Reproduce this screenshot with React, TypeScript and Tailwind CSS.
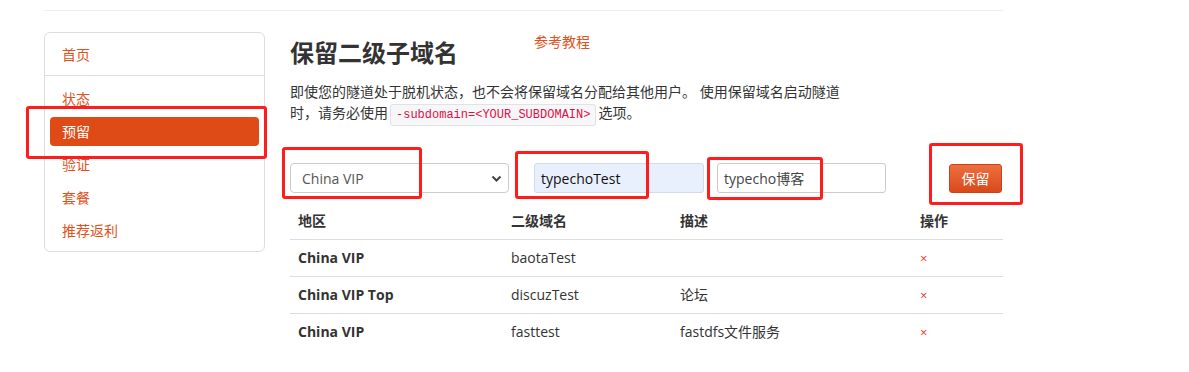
const FONT = { fontFamily: '"Open Sans", "Noto Sans CJK SC", sans-serif' };

const navItems = ['状态', '预留', '验证', '套餐', '推荐返利'];

const rows = [
  { region: 'China VIP', sub: 'baotaTest', desc: '' },
  { region: 'China VIP Top', sub: 'discuzTest', desc: '论坛' },
  { region: 'China VIP', sub: 'fasttest', desc: 'fastdfs文件服务' },
];

// red annotation frames drawn on top of the screenshot
const marks = [
  'left-[26px] top-[106px] w-[241px] h-[53px]',
  'left-[282px] top-[147px] w-[140px] h-[52px]',
  'left-[515px] top-[151px] w-[134px] h-[48px]',
  'left-[707px] top-[157px] w-[116px] h-[43px]',
  'left-[929px] top-[143px] w-[94px] h-[62px]',
];

const App = () => {
  return (
    <div className="relative w-[1189px] h-[372px] bg-white text-[#333] overflow-hidden" style={FONT}>
      <div className="ml-[44px] w-[959px] pt-[10px]">
        <div className="border-t border-[#eeeeee]"></div>

        <div className="flex mt-[21px]">
          {/* sidebar */}
          <div className="w-[221px] h-[220px] shrink-0 border border-[#dddddd] rounded-[6px] text-[14px] text-[#e0521c]">
            <div className="h-[43px] flex items-center pl-[17px] border-b border-[#dddddd]">首页</div>
            <div className="pt-[6px]">
              {navItems.map(item =>
                item === '预留' ? (
                  <div key={item} className="h-[33px] flex items-center px-[5px]">
                    <div className="w-full h-[29px] flex items-center pl-[12px] bg-[#df4b16] text-white rounded-[4px]">
                      {item}
                    </div>
                  </div>
                ) : (
                  <div key={item} className="h-[33px] flex items-center pl-[17px]">{item}</div>
                )
              )}
            </div>
          </div>

          {/* main */}
          <div className="ml-[25px] w-[713px]">
            <div className="flex">
              <h1 className="text-[24px] font-bold leading-[40px] pt-[1px] text-[#333]">保留二级子域名</h1>
              <a className="ml-[76px] text-[14px] leading-[20px] text-[#e0521c]">参考教程</a>
            </div>

            <p className="mt-[8px] text-[14px] leading-[21px] text-[#333]">
              即使您的隧道处于脱机状态，也不会将保留域名分配给其他用户。 使用保留域名启动隧道
              <br />
              时，请务必使用
              <code className="mx-[2px] px-[5px] py-[3px] text-[12px] text-[#dd1144] bg-[#f7f7f9] border border-[#e1e1e8] rounded-[3px] font-['Liberation_Mono',monospace]">
                -subdomain=&lt;YOUR_SUBDOMAIN&gt;
              </code>
              选项。
            </p>

            <div className="flex items-center mt-[37px] h-[30px] text-[14px]">
              <div className="relative w-[219px] h-[30px] border border-[#cccccc] rounded-[4px] flex items-center pl-[11px] text-[#555]">
                China VIP
                <svg className="absolute right-[6px] top-[11px]" width="11" height="8" viewBox="0 0 11 8">
                  <path d="M1.5 1.5 L5.5 5.5 L9.5 1.5" fill="none" stroke="#444" strokeWidth="2" />
                </svg>
              </div>
              <div className="ml-[25px] w-[170px] h-[30px] border border-[#d3dbe8] rounded-[3px] bg-[#e8f0fe] flex items-center pl-[6px] text-[#111]">
                typechoTest
              </div>
              <div className="ml-[13px] w-[169px] h-[30px] border border-[#cccccc] rounded-[3px] flex items-center pl-[6px] text-[#444]">
                typecho博客
              </div>
              <button className="ml-[63px] w-[53px] h-[29px] rounded-[3px] border border-[#c9431a] bg-gradient-to-b from-[#ee6e3e] to-[#d9491a] text-white text-[14px]">
                保留
              </button>
            </div>

            <table className="mt-[9px] w-full text-[14px] border-collapse">
              <thead>
                <tr className="h-[37px] border-b border-[#dddddd] text-left">
                  <th className="w-[213px] pl-[8px] font-bold">地区</th>
                  <th className="w-[169px] pl-[8px] font-bold">二级域名</th>
                  <th className="w-[240px] pl-[8px] font-bold">描述</th>
                  <th className="pl-[8px] font-bold">操作</th>
                </tr>
              </thead>
              <tbody>
                {rows.map((r, i) => (
                  <tr key={i} className={`h-[37px] ${i < rows.length - 1 ? 'border-b border-[#dddddd]' : ''}`}>
                    <td className="pl-[8px] font-bold">{r.region}</td>
                    <td className="pl-[8px]">{r.sub}</td>
                    <td className="pl-[8px]">{r.desc}</td>
                    <td className="pl-[8px] pt-[2px] text-[13px] text-[#e53a2a]">×</td>
                  </tr>
                ))}
              </tbody>
            </table>
          </div>
        </div>
      </div>

      {marks.map((m, i) => (
        <div key={i} className={`absolute ${m} border-[3px] border-[#ff1c1c] rounded-[3px] pointer-events-none`}></div>
      ))}
    </div>
  );
};

export default App;
